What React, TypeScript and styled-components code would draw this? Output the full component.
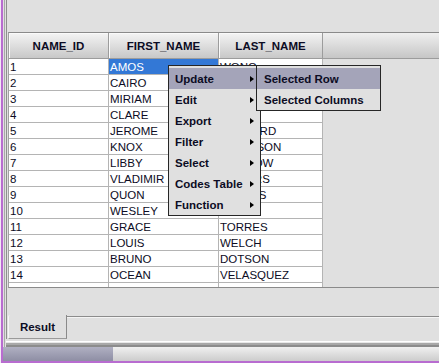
import React from 'react';
import styled, { createGlobalStyle } from 'styled-components';

const GlobalStyle = createGlobalStyle`
  html, body {
    margin: 0;
    padding: 0;
    background: #e0e0e0;
  }
  body {
    font-family: 'Liberation Sans', Arial, sans-serif;
  }
`;

const purple = '#b86cd0';
const gridLine = '#b4b4b4';

const Window = styled.div`
  position: relative;
  width: 439px;
  height: 363px;
  box-sizing: border-box;
  border-left: 1px solid #f2e8f5;
  background: #e0e0e0;
  overflow: hidden;
`;

const Shell = styled.div`
  height: 100%;
  box-sizing: border-box;
  border-left: 2px solid ${purple};
  border-bottom: 2px solid ${purple};
  display: flex;
  flex-direction: column;
`;

const Workspace = styled.div`
  flex: 1;
  display: flex;
  flex-direction: column;
  margin-left: 1px;
  padding-left: 1px;
  border-left: 1px solid #a8a8a8;
`;

const TabPane = styled.div`
  display: flex;
  flex-direction: column;
  padding-left: 1px;
  border-left: 1px solid #8e8e8e;
`;

const TopGap = styled.div`
  height: 32px;
`;

const TablePanel = styled.div`
  height: 256px;
  box-sizing: border-box;
  border-top: 1px solid #8a8a8a;
  border-bottom: 1px solid #8a8a8a;
  border-left: 1px solid #a0a0a0;
  display: flex;
  flex-direction: column;
`;

const HeaderRow = styled.div`
  display: flex;
  height: 25px;
  border-bottom: 1px solid #9c9c9c;
  background: linear-gradient(#efefef, #c6c6c6);
`;

const HeaderCell = styled.div<{ $w: number }>`
  width: ${p => p.$w}px;
  box-sizing: border-box;
  border-right: 1px solid #9c9c9c;
  box-shadow: inset 1px 1px 0 #fafafa;
  background: linear-gradient(#f4f4f4, #c8c8c8);
  display: flex;
  align-items: center;
  justify-content: center;
  font-weight: bold;
  font-size: 11.5px;
  color: #0c0c24;
`;

const Body = styled.div`
  height: 228px;
  overflow: hidden;
`;

const Row = styled.div`
  display: flex;
`;

const Cell = styled.div<{ $w: number; $selected?: boolean }>`
  width: ${p => p.$w}px;
  height: 16px;
  box-sizing: border-box;
  border-right: 1px solid ${gridLine};
  border-bottom: 1px solid ${gridLine};
  padding: 1px 0 0 1px;
  font-size: 11.5px;
  line-height: 14px;
  white-space: nowrap;
  overflow: hidden;
  background: ${p => (p.$selected ? '#3378d6' : '#ffffff')};
  color: ${p => (p.$selected ? '#ffffff' : '#0c0c24')};
`;

const BottomGap = styled.div`
  height: 27px;
`;

const TabStrip = styled.div`
  display: flex;
  height: 24px;
`;

const Tab = styled.div`
  width: 59px;
  box-sizing: border-box;
  border-left: 1px solid #f6f6f6;
  border-right: 1px solid #8a8a8a;
  border-bottom: 1px solid #9a9a9a;
  border-top-left-radius: 2px;
  display: flex;
  align-items: center;
  justify-content: center;
  padding-top: 1px;
  font-weight: bold;
  font-size: 11.5px;
  color: #0c0c24;
`;

const TabFiller = styled.div`
  flex: 1;
  margin-top: 1px;
  border-top: 1px solid #8c8c8c;
  box-shadow: inset 0 1px 0 #f4f4f4;
`;

const Divider = styled.div`
  margin-top: 2px;
  height: 6px;
  background: linear-gradient(#ffffff 0 1px, #e8e8e8 1px 2px, #a8a8a8 2px 4px, #8c8c8c 4px 6px);
`;

const StatusBar = styled.div`
  display: flex;
  height: 14px;
`;

const StatusThumb = styled.div`
  width: 110px;
  background: linear-gradient(#b0b0c2, #8e8ea4);
`;

const StatusRest = styled.div`
  flex: 1;
  background: linear-gradient(#f0f0f0, #cccccc);
`;

const Menu = styled.div<{ $x: number; $y: number; $w: number }>`
  position: absolute;
  left: ${p => p.$x}px;
  top: ${p => p.$y}px;
  width: ${p => p.$w}px;
  box-sizing: border-box;
  padding: 2px 0 0;
  background: #e0e0e0;
  border: 1px solid #262626;
`;

const MenuItem = styled.div<{ $active?: boolean; $pad: number }>`
  height: 21px;
  display: flex;
  align-items: center;
  justify-content: space-between;
  padding: 0 6px 0 ${p => p.$pad}px;
  background: ${p => (p.$active ? '#a4a4b9' : 'transparent')};
  font-weight: bold;
  font-size: 11.5px;
  color: #0c0c24;
  white-space: nowrap;
`;

const Arrow = styled.span`
  width: 0;
  height: 0;
  border-top: 3.5px solid transparent;
  border-bottom: 3.5px solid transparent;
  border-left: 4px solid #000;
`;

const columns = [100, 110, 104];
const headers = ['NAME_ID', 'FIRST_NAME', 'LAST_NAME'];

const rows: [string, string, string][] = [
  ['1', 'AMOS', 'WONG'],
  ['2', 'CAIRO', 'DIAZ'],
  ['3', 'MIRIAM', 'PARK'],
  ['4', 'CLARE', 'KANE'],
  ['5', 'JEROME', 'BERNARD'],
  ['6', 'KNOX', 'ROBINSON'],
  ['7', 'LIBBY', 'BRISTOW'],
  ['8', 'VLADIMIR', 'ROGERS'],
  ['9', 'QUON', 'HAYNES'],
  ['10', 'WESLEY', 'LEE'],
  ['11', 'GRACE', 'TORRES'],
  ['12', 'LOUIS', 'WELCH'],
  ['13', 'BRUNO', 'DOTSON'],
  ['14', 'OCEAN', 'VELASQUEZ'],
  ['15', 'JUSTIN', "O'CONNELL"],
];

const menuItems = ['Update', 'Edit', 'Export', 'Filter', 'Select', 'Codes Table', 'Function'];
const subItems = ['Selected Row', 'Selected Columns'];

export default function App() {
  return (
    <>
      <GlobalStyle />
      <Window>
        <Shell>
          <Workspace>
            <TabPane>
              <TopGap />
              <TablePanel>
                <HeaderRow>
                  {headers.map((h, i) => (
                    <HeaderCell key={h} $w={columns[i]}>{h}</HeaderCell>
                  ))}
                </HeaderRow>
                <Body>
                  {rows.map(r => (
                    <Row key={r[0]}>
                      {r.map((v, i) => (
                        <Cell key={i} $w={columns[i]} $selected={r[0] === '1' && i === 1}>
                          {v}
                        </Cell>
                      ))}
                    </Row>
                  ))}
                </Body>
              </TablePanel>
              <BottomGap />
              <TabStrip>
                <Tab>Result</Tab>
                <TabFiller />
              </TabStrip>
            </TabPane>
            <Divider />
          </Workspace>
          <StatusBar>
            <StatusThumb />
            <StatusRest />
          </StatusBar>
        </Shell>

        <Menu $x={167} $y={65} $w={93}>
          {menuItems.map((m, i) => (
            <MenuItem key={m} $pad={6} $active={i === 0}>
              {m}
              <Arrow />
            </MenuItem>
          ))}
        </Menu>
        <Menu $x={255} $y={65} $w={125}>
          {subItems.map((m, i) => (
            <MenuItem key={m} $pad={7} $active={i === 0}>
              {m}
            </MenuItem>
          ))}
        </Menu>
      </Window>
    </>
  );
}
